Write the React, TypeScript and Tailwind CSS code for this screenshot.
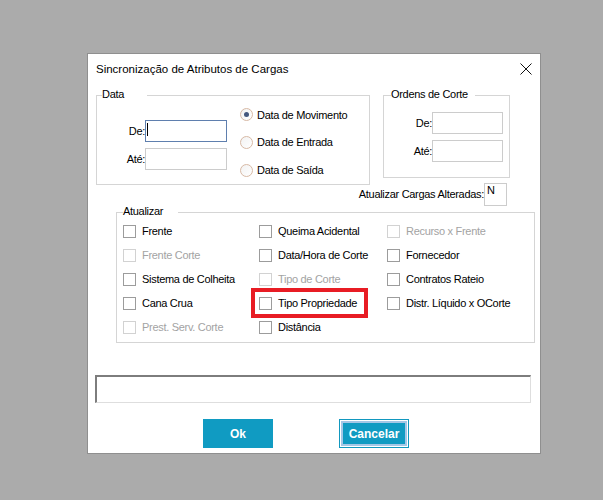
import React from 'react';

type Item = { label: string; disabled?: boolean; mark?: boolean } | null;

const rows: Item[][] = [
  [{ label: 'Frente' }, { label: 'Queima Acidental' }, { label: 'Recurso x Frente', disabled: true }],
  [{ label: 'Frente Corte', disabled: true }, { label: 'Data/Hora de Corte' }, { label: 'Fornecedor' }],
  [{ label: 'Sistema de Colheita' }, { label: 'Tipo de Corte', disabled: true }, { label: 'Contratos Rateio' }],
  [{ label: 'Cana Crua' }, { label: 'Tipo Propriedade', mark: true }, { label: 'Distr. Líquido x OCorte' }],
  [{ label: 'Prest. Serv. Corte', disabled: true }, { label: 'Distância' }, null],
];

const Caption = ({ text, left, width }: { text: string; left: string; width: string }) => (
  <span
    className={`absolute top-[-9px] ${left} ${width} h-[14px] leading-[14px] bg-white text-[11px] tracking-[-0.3px] text-black`}
  >
    {text}
  </span>
);

const Radio = ({ label, checked }: { label: string; checked?: boolean }) => (
  <div className="h-[28px] flex items-center gap-[4px]">
    <span className="w-[13px] h-[13px] rounded-full border border-[#d7b9a5] bg-gradient-to-br from-[#f2f2f2] to-white flex items-center justify-center">
      {checked && <span className="w-[5px] h-[5px] rounded-full bg-[#44587e]" />}
    </span>
    <span className="text-[11px] tracking-[-0.3px] text-black">{label}</span>
  </div>
);

const Check = ({ item }: { item: Item }) => {
  if (!item) return <div />;
  return (
    <div className="relative h-[24px] flex items-center gap-[6px]">
      <span
        className={`w-[13px] h-[13px] border bg-white ${item.disabled ? 'border-[#d2d2d2]' : 'border-[#9c9c9c]'}`}
      />
      <span className={`text-[11px] tracking-[-0.3px] whitespace-nowrap ${item.disabled ? 'text-[#a3a3a3]' : 'text-black'}`}>
        {item.label}
      </span>
      {item.mark && (
        <span className="absolute left-[-8px] top-[-3px] w-[117px] h-[30px] border-[4px] border-[#e81c24] pointer-events-none" />
      )}
    </div>
  );
};

const Field = ({ label, labelW, inputW, focused }: { label: string; labelW: string; inputW: string; focused?: boolean }) => (
  <div className="flex items-center">
    <span className={`${labelW} text-right text-[11px] tracking-[-0.3px] text-black`}>{label}</span>
    <div
      className={`${inputW} h-[22px] border bg-white ${focused ? 'border-[#5f7fae]' : 'border-[#cccccc]'}`}
    >
      {focused && <div className="w-px h-[13px] bg-black ml-px mt-[2px]" />}
    </div>
  </div>
);

export default function App() {
  return (
    <div className="w-[603px] h-[500px] bg-[#ababab] pt-[53px] font-['Liberation_Sans',Arial,sans-serif] overflow-hidden">
      <div className="ml-[87px] w-[454px] h-[401px] bg-white border border-[#8f8f8f]">
        {/* title */}
        <div className="relative h-[41px] pl-[8px] pt-[7px]">
          <div className="text-[11.5px] leading-[16px] text-black">Sincronização de Atributos de Cargas</div>
          <svg className="absolute left-[432px] top-[9px]" width="12" height="12" viewBox="0 0 12 12">
            <path d="M0.5 0.5L11.5 11.5M11.5 0.5L0.5 11.5" stroke="#111" strokeWidth="1" fill="none" />
          </svg>
        </div>

        {/* top groups */}
        <div className="flex items-start">
          <div className="relative ml-[8px] w-[274px] h-[90px] border border-[#d5d5d5] flex">
            <Caption text="Data" left="left-[5px]" width="w-[45px]" />
            <div className="pt-[24px] flex flex-col gap-[6px]">
              <Field label="De:" labelW="w-[48px]" inputW="w-[82px]" focused />
              <Field label="Até:" labelW="w-[48px]" inputW="w-[82px]" />
            </div>
            <div className="ml-[13px] pt-[5px] flex flex-col">
              <Radio label="Data de Movimento" checked />
              <Radio label="Data de Entrada" />
              <Radio label="Data de Saída" />
            </div>
          </div>

          <div className="ml-[13px] w-[127px] flex flex-col">
            <div className="relative h-[83px] border border-[#d5d5d5] pt-[16px] flex flex-col gap-[6px]">
              <Caption text="Ordens de Corte" left="left-[7px]" width="w-[84px]" />
              <Field label="De:" labelW="w-[48px]" inputW="w-[71px]" />
              <Field label="Até:" labelW="w-[48px]" inputW="w-[71px]" />
            </div>
            <div className="mt-[5px] pr-[3px] flex justify-end items-center">
              <span className="whitespace-nowrap text-[11px] tracking-[-0.3px] text-black">Atualizar Cargas Alteradas:</span>
              <div className="shrink-0 w-[23px] h-[23px] border border-[#cccccc] bg-white pl-[2px] text-[11px] leading-[12px] text-black">
                N
              </div>
            </div>
          </div>
        </div>

        {/* atualizar group */}
        <div className="relative mt-[6px] ml-[28px] w-[419px] h-[131px] border border-[#d5d5d5] pl-[6px] pt-[6px]">
          <Caption text="Atualizar" left="left-[6px]" width="w-[55px]" />
          <div className="grid grid-cols-[136px_128px_1fr]">
            {rows.flat().map((item, i) => (
              <Check key={i} item={item} />
            ))}
          </div>
        </div>

        {/* status */}
        <div className="mt-[32px] ml-[7px] w-[436px] h-[28px] border-t-2 border-l-2 border-t-[#7d7d7d] border-l-[#7d7d7d] border-b border-r border-b-[#dedede] border-r-[#dedede] bg-white" />

        {/* buttons */}
        <div className="mt-[16px] flex">
          <button className="ml-[115px] w-[70px] h-[29px] bg-[#109bc2] text-white font-bold text-[12px]">Ok</button>
          <button className="ml-[66px] w-[70px] h-[29px] border border-[#1298bf] bg-white p-px">
            <div className="w-full h-full border-2 border-[#a3c7e6] bg-[#109bc2] text-white font-bold text-[12px] flex items-center justify-center">
              Cancelar
            </div>
          </button>
        </div>
      </div>
    </div>
  );
}
